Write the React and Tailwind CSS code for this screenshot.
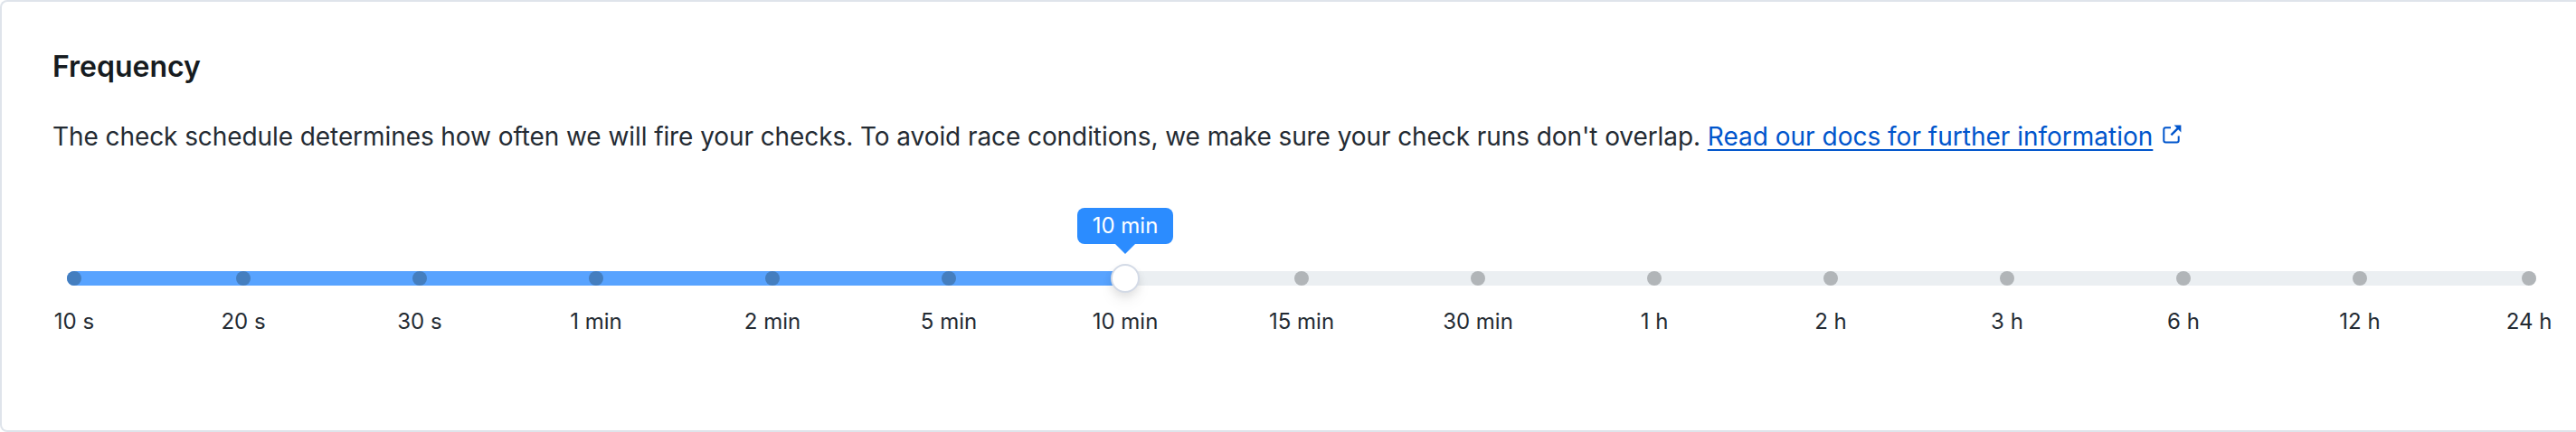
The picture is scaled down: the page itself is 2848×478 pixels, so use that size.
const steps = ["10 s", "20 s", "30 s", "1 min", "2 min", "5 min", "10 min", "15 min", "30 min", "1 h", "2 h", "3 h", "6 h", "12 h", "24 h"];
const selected = 6;

function ExternalLinkIcon() {
  return (
    <svg className="ml-[10px] inline-block h-[22px] w-[22px] align-[1px]" viewBox="0 0 22 22" fill="none" stroke="currentColor" strokeWidth="2">
      <path d="M10 3.2H4.3Q2.3 3.2 2.3 5.2V17.5Q2.3 19.5 4.3 19.5H16.7Q18.7 19.5 18.7 17.5V12.5" />
      <path d="M10.4 11.4L18 3.8" strokeWidth="2.4" />
      <path d="M13.6 0.6H21.4V8.4Z" fill="currentColor" stroke="none" />
    </svg>
  );
}

function Step({ label, index }) {
  const edge = index === 0 || index === steps.length - 1;
  const dot = index < selected ? "bg-[#447ebf]" : "bg-[#b1b5b8]";
  return (
    <div className={`flex shrink-0 flex-col items-center ${edge ? "w-4" : "w-[195px]"} ${index === 0 ? "mr-[81.5px]" : ""} ${index === steps.length - 1 ? "ml-[81.5px]" : ""}`}>
      <div className="relative flex h-4 items-center justify-center">
        {index === selected ? (
          <>
            <div className="h-8 w-8 shrink-0 rounded-full border-2 border-[#d3dae6] bg-white shadow-[0_4px_8px_rgba(0,0,0,0.08),0_10px_16px_rgba(0,0,0,0.05)]" />
            <div className="absolute bottom-[46px] left-1/2 flex h-10 w-[106px] -translate-x-1/2 items-center justify-center rounded-lg bg-[#2b8cff] text-white">
              <span className="whitespace-nowrap">{label}</span>
              <svg className="absolute left-[42px] top-10 h-[11px] w-[22px]" viewBox="0 0 22 11">
                <path d="M0 0H22L11 11Z" fill="#2b8cff" />
              </svg>
            </div>
          </>
        ) : (
          <div className={`h-4 w-4 rounded-full ${dot}`} />
        )}
      </div>
      <span className="mt-[22px] whitespace-nowrap leading-[35px]">{label}</span>
    </div>
  );
}

export default function App() {
  return (
    <div className="h-[478px] w-full overflow-hidden bg-white font-['Inter',sans-serif] text-[#242b33] antialiased">
      <section className="h-full w-full rounded-l-lg border-2 border-r-0 border-[#dfe4eb] pl-14 pt-[50px]">
        <h2 className="text-[32px] font-semibold leading-[43px] text-[#161b20]">Frequency</h2>
        <p className="mt-[35px] h-[42px] whitespace-nowrap text-[28px] leading-[42px]">
          <span className="tracking-[-0.08px]">
            The check schedule determines how often we will fire your checks. To avoid race conditions, we make sure your check runs don't overlap.{" "}
          </span>
          <a href="#docs" className="text-[#0055cc]">
            <span className="underline decoration-2 underline-offset-4">Read our docs for further information</span>
            <ExternalLinkIcon />
          </a>
        </p>
        <div className="ml-4 mt-[128px] w-[2730px] text-2xl">
          <div className="flex h-4 rounded-full bg-[#ebeff2]">
            <div className="h-4 w-[1170px] rounded-l-full bg-[#58a3ff]" />
          </div>
          <div className="relative -mt-4 flex">
            {steps.map((label, index) => (
              <Step key={label} label={label} index={index} />
            ))}
          </div>
        </div>
      </section>
    </div>
  );
}
